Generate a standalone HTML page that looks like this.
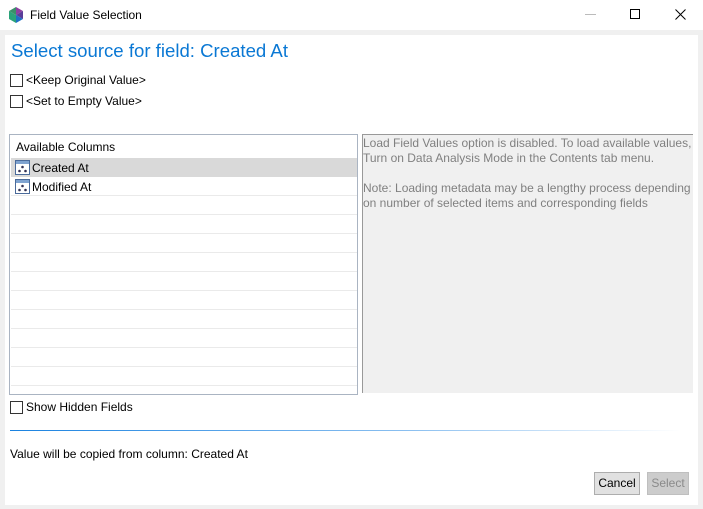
<!DOCTYPE html>
<html><head><meta charset="utf-8"><style>
*{margin:0;padding:0;box-sizing:border-box}
body{width:703px;height:509px;background:#f0f0f0;font-family:"Liberation Sans",sans-serif;font-size:12px;color:#000;position:relative;overflow:hidden}
.abs{position:absolute}
.cb{position:absolute;width:13px;height:13px;border:1px solid #333;background:#fff}
.t{position:absolute;font-size:12px;white-space:nowrap}
.row{position:absolute;left:1px;width:346px;height:19px;border-bottom:1px solid #eaeaea}
</style></head><body>
<div class="abs" style="left:0;top:0;width:703px;height:30px;background:#fff"></div>
<svg class="abs" style="left:8px;top:7px" width="16" height="16" viewBox="0 0 16 16">
<polygon points="8,0 15,4 8,8" fill="#8e3fa0"/><polygon points="15,4 15,12 8,8" fill="#5a3d9a"/>
<polygon points="1,4 8,8 8,16 1,12" fill="#2aa37a"/><polygon points="8,8 15,12 8,16" fill="#1f6fc5"/><polygon points="1,4 8,0 8,8" fill="#3a8f6a"/></svg>
<div class="t" style="left:30px;top:8px;font-size:12px">Field Value Selection</div>
<div class="abs" style="left:585px;top:14px;width:11px;height:1px;background:#bbb"></div>
<div class="abs" style="left:630px;top:9px;width:10px;height:10px;border:1px solid #000"></div>
<svg class="abs" style="left:675px;top:9px" width="11" height="11"><path d="M0.5 0.5L10.5 10.5M10.5 0.5L0.5 10.5" stroke="#000" stroke-width="1"/></svg>
<div class="abs" style="left:5px;top:35px;width:693px;height:470px;background:#fff"></div>
<div class="t" style="left:11px;top:40px;font-size:18.6px;color:#0a78d4">Select source for field: Created At</div>
<div class="cb" style="left:10px;top:74px"></div><div class="t" style="left:26px;top:73px">&lt;Keep Original Value&gt;</div>
<div class="cb" style="left:10px;top:95px"></div><div class="t" style="left:26px;top:94px">&lt;Set to Empty Value&gt;</div>
<div class="abs" style="left:9px;top:134px;width:349px;height:261px;border:1px solid #aab4c2;background:#fff">
<div class="t" style="left:6px;top:5px">Available Columns</div>
<div class="row" style="top:23px;background:#d9d9d9;border-bottom:none"></div>
<div class="row" style="top:42px"></div><div class="row" style="top:61px"></div><div class="row" style="top:80px"></div>
<div class="row" style="top:99px"></div><div class="row" style="top:118px"></div><div class="row" style="top:137px"></div>
<div class="row" style="top:156px"></div><div class="row" style="top:175px"></div><div class="row" style="top:194px"></div>
<div class="row" style="top:213px"></div><div class="row" style="top:232px"></div>
<svg class="abs" style="left:5px;top:25px" width="15" height="15"><rect x="0.5" y="0.5" width="14" height="14" fill="#fff" stroke="#4a6a9a"/><rect x="1" y="1" width="13" height="3" fill="#7fa3d0"/><circle cx="7.5" cy="7" r="1.3" fill="#335"/><circle cx="4.5" cy="11" r="1.3" fill="#335"/><circle cx="10.5" cy="11" r="1.3" fill="#335"/></svg>
<div class="t" style="left:22px;top:26px">Created At</div>
<svg class="abs" style="left:5px;top:44px" width="15" height="15"><rect x="0.5" y="0.5" width="14" height="14" fill="#fff" stroke="#4a6a9a"/><rect x="1" y="1" width="13" height="3" fill="#7fa3d0"/><circle cx="7.5" cy="7" r="1.3" fill="#335"/><circle cx="4.5" cy="11" r="1.3" fill="#335"/><circle cx="10.5" cy="11" r="1.3" fill="#335"/></svg>
<div class="t" style="left:22px;top:45px">Modified At</div>
</div>
<div class="abs" style="left:362px;top:134px;width:331px;height:259px;background:#f0f0f0;border-left:1px solid #999;border-top:1px solid #999"></div>
<div class="t" style="left:363px;top:136px;color:#808080;line-height:15px">Load Field Values option is disabled. To load available values,<br>Turn on Data Analysis Mode in the Contents tab menu.<br><br>Note: Loading metadata may be a lengthy process depending<br>on number of selected items and corresponding fields</div>
<div class="cb" style="left:10px;top:401px"></div><div class="t" style="left:26px;top:400px">Show Hidden Fields</div>
<div class="abs" style="left:10px;top:430px;width:670px;height:1px;background:linear-gradient(to right,#1a82e0,#8cc0f0 60%,#fff)"></div>
<div class="t" style="left:10px;top:447px">Value will be copied from column: Created At</div>
<div class="abs" style="left:594px;top:472px;width:46px;height:23px;background:#e1e1e1;border:1px solid #adadad;text-align:center;line-height:21px">Cancel</div>
<div class="abs" style="left:647px;top:472px;width:42px;height:23px;background:#cccccc;border:1px solid #bfbfbf;text-align:center;line-height:21px;color:#8a8a8a">Select</div>
</body></html>
